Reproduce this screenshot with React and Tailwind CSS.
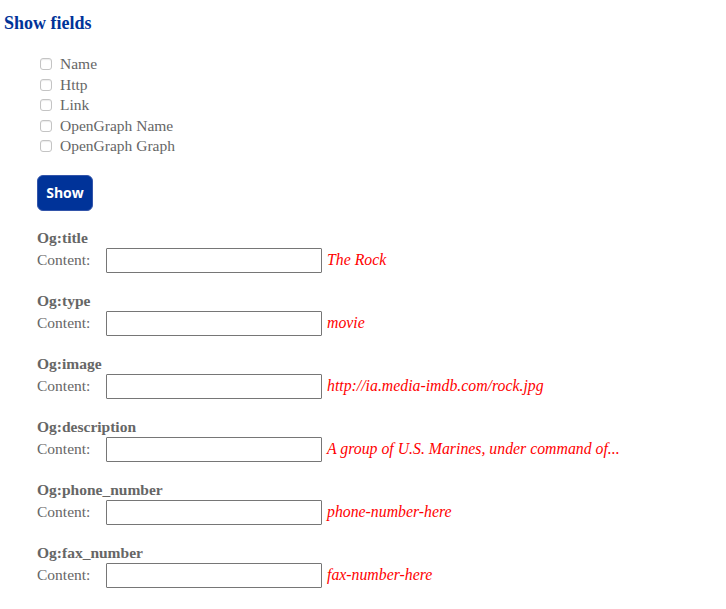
import React from 'react';

const fields = [
  { name: 'Name' },
  { name: 'Http' },
  { name: 'Link' },
  { name: 'OpenGraph Name' },
  { name: 'OpenGraph Graph' },
];

const ogTags = [
  { tag: 'Og:title', value: 'The Rock' },
  { tag: 'Og:type', value: 'movie' },
  { tag: 'Og:image', value: 'http://ia.media-imdb.com/rock.jpg' },
  { tag: 'Og:description', value: 'A group of U.S. Marines, under command of...' },
  { tag: 'Og:phone_number', value: 'phone-number-here' },
  { tag: 'Og:fax_number', value: 'fax-number-here' },
];

const App = () => {
  return (
    <div className="min-h-screen bg-white font-['Liberation_Serif',serif] text-[15.5px] text-[#666]">
      <h2 className="px-1 pt-[12px] text-[18px] font-bold leading-[22px] text-[#003399]">
        Show fields
      </h2>

      <div className="ml-[40px] mt-[20px]">
        {fields.map((f) => (
          <label key={f.name} className="flex h-[20.5px] items-center">
            <input
              type="checkbox"
              className="m-0 h-[12px] w-[12px] appearance-none rounded-[3px] border border-[#c4c4c4] bg-white shadow-[inset_0_1px_1px_rgba(0,0,0,0.08)]"
            />
            <span className="ml-[8px] leading-[20px]">{f.name}</span>
          </label>
        ))}
      </div>

      <button
        type="button"
        className="ml-[37px] mt-[18px] h-[36px] w-[56px] rounded-[6px] border border-[#3355aa] bg-[#003399] font-['Open_Sans',sans-serif] text-[14px] font-bold text-white"
      >
        Show
      </button>

      <div className="ml-[37px] mt-[17px]">
        {ogTags.map((t) => (
          <div key={t.tag} className="mb-[18px]">
            <div className="h-[20px] font-bold leading-[20px]">{t.tag}</div>
            <div className="flex items-center">
              <span className="w-[69px] leading-[20px]">Content:</span>
              <input
                type="text"
                className="h-[25px] w-[216px] rounded-[1px] border border-[#767676] bg-white px-1 outline-none"
              />
              <span className="ml-[5px] text-[15.8px] italic text-[#ff0000]">{t.value}</span>
            </div>
          </div>
        ))}
      </div>
    </div>
  );
};

export default App;
